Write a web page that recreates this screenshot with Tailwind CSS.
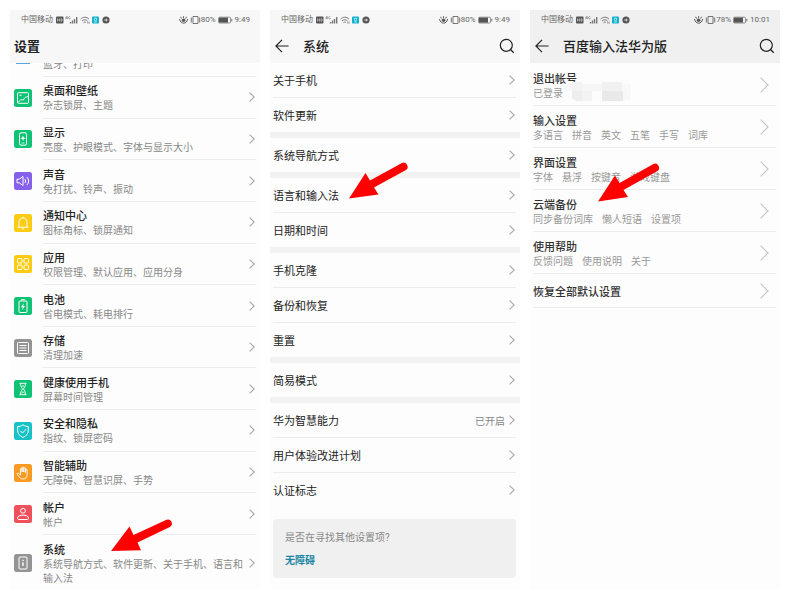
<!DOCTYPE html>
<html lang="zh-CN">
<head>
    <meta charset="UTF-8">
    <meta name="viewport" content="width=device-width, initial-scale=1.0">
    <title>设置</title>
    <script src="https://cdn.jsdelivr.net/npm/@tailwindcss/browser@4"></script>
</head>
<body class="bg-white font-['Roboto','Noto_Sans_CJK_SC',sans-serif] text-[#333]">

    <!-- 公共图标 -->
    <svg class="hidden">
        <symbol id="status-left" viewBox="0 0 55 10">
            <rect x="0" y="1.5" width="7.5" height="7" rx="1" fill="#555"/>
            <path d="M1.5 3.5v3M3.5 3.5v3M1.5 5h2M5 3.5v3c1.6 0 1.6-3 0-3" stroke="#ddd" stroke-width=".6" fill="none"/>
            <path d="M11 1.2L9.6 3.2h2M11.1 1.2v3M14.2 1.8c-1.8-1-2.2 2.2-.4 2.2.5 0 .5-.6.5-1" stroke="#777" stroke-width=".7" fill="none"/>
            <path d="M14.5 8.5v-1.5M16.5 8.5v-3M18.5 8.5v-4.5M20.7 8.5v-6.500" stroke="#777" stroke-width="1.4"/>
            <path d="M24.6 4.2c2.4-2.6 6-2.600 8.4 0M26 6c1.6-1.600 4-1.600 5.6 0M27.500 7.700c.8-.8 1.800-.8 2.600 0" stroke="#777" stroke-width="1" fill="none"/>
            <path d="M31.8 6.500v2.200M33.200 6.500v2.200" stroke="#777" stroke-width=".7"/>
            <rect x="36" y="1.5" width="7" height="7" rx="1" fill="#12b0cc"/>
            <path d="M38.4 3.2v1.6a1.1 1.1 0 0 0 2.2 0V3.2zM38.2 7h2.6" stroke="#c8f3fa" stroke-width=".8" fill="none"/>
            <circle cx="50" cy="5" r="3.6" fill="#555"/>
            <path d="M48.200 5h3.600M50.400 3.600v2.800" stroke="#ddd" stroke-width=".9"/>
        </symbol>
        <symbol id="status-eye" viewBox="0 0 22 10">
            <path d="M.5 4c1.200 5.600 7 5.600 8.200 0M2.600 3.600L1.600 1.800M4.600 3V1.200M6.600 3.600L7.600 1.800" stroke="#555" stroke-width="1" fill="none"/>
            <circle cx="4.600" cy="5.200" r="1.800" fill="#555"/>
            <path d="M14 1.5h5v7h-5zM12.3 2.5v5M20.7 2.5v5" stroke="#666" stroke-width=".9" fill="none"/>
        </symbol>
        <symbol id="battery-level" viewBox="0 0 15 10">
            <rect x=".5" y="2.2" width="12" height="5.8" rx="1" fill="none" stroke="#777" stroke-width=".8"/>
            <rect x="1" y="2.6" width="9" height="5" fill="#555"/>
            <path d="M13.8 3.8v2.6" stroke="#777" stroke-width="1"/>
        </symbol>
        <symbol id="chevron" viewBox="0 0 6 10">
            <path d="M.6.6L5.2 5 .6 9.4" fill="none" stroke="currentColor" stroke-width="1.2"/>
        </symbol>
        <symbol id="chevron-large" viewBox="0 0 9 16">
            <path d="M.7.7L8 8 .7 15.3" fill="none" stroke="currentColor" stroke-width="1.1"/>
        </symbol>
        <symbol id="back" viewBox="0 0 14 14">
            <path d="M7 .8L.9 7 7 13.2M1 7h12.6" fill="none" stroke="#222" stroke-width="1.2"/>
        </symbol>
        <symbol id="search" viewBox="0 0 16 16">
            <circle cx="7.3" cy="7.3" r="6" fill="none" stroke="#222" stroke-width="1.2"/>
            <path d="M11.5 11.5l3.2 3.2" stroke="#222" stroke-width="1.3"/>
        </symbol>
    </svg>

    <main class="min-h-screen p-[10px] grid grid-cols-3 gap-[10px]">

        <!-- 设置 -->
        <section class="flex flex-col bg-[#fdfdfd]">
            <header class="h-[53px] bg-[#f7f7f7]">
                <div class="h-[18px] pt-px pl-[11px] pr-[10px] flex items-center text-[8px] text-[#666]">
                    <span>中国移动</span>
                    <svg class="w-[55px] h-[10px] ml-[3px]"><use href="#status-left"/></svg>
                    <svg class="w-[22px] h-[10px] ml-auto"><use href="#status-eye"/></svg>
                    <span>80%</span>
                    <svg class="w-[15px] h-[10px] mx-[2px]"><use href="#battery-level"/></svg>
                    <span>9:49</span>
                </div>
                <h1 class="pt-px pl-1 text-[13px] leading-9 font-bold text-[#222]">设置</h1>
            </header>
            <nav class="flex-1 flex flex-col text-[10px] leading-[14px] text-[#888]">
                <a href="#" class="h-[14px] px-1 flex gap-[11px] overflow-hidden">
                    <span class="w-[18px] px-[2px]"><span class="block h-px bg-[#5aa5dd]"></span></span>
                    <span class="flex-1 h-[14px] flex items-end border-b border-[#ececec]"><span class="mb-1">蓝牙、打印</span></span>
                </a>
                <a href="#" class="flex-1 px-1 flex items-center gap-[11px]">
                    <svg class="w-[18px] h-[18px]" viewBox="0 0 18 18" fill="none" stroke="#fff">
                        <rect width="18" height="18" rx="2.5" fill="#10c274" stroke="none"/>
                        <rect x="3.5" y="3.7" width="11" height="10.6" rx="1"/>
                        <path d="M4.500 13.500c1.500-3 3-3 4.800-2.500C10.500 8.500 12 7.700 14 7.700M5.500 6.300L7.500 6.300"/>
                    </svg>
                    <span class="flex-1 self-stretch flex items-center border-b border-[#ececec] pr-px">
                        <span class="flex-1 pt-1"><b class="block text-[11px] font-medium text-[#222]">桌面和壁纸</b>杂志锁屏、主题</span>
                        <svg class="w-[6px] h-[10px] text-[#aaa]"><use href="#chevron"/></svg>
                    </span>
                </a>
                <a href="#" class="flex-1 px-1 flex items-center gap-[11px]">
                    <svg class="w-[18px] h-[18px]" viewBox="0 0 18 18" fill="none" stroke="#fff">
                        <rect width="18" height="18" rx="2.5" fill="#10c274" stroke="none"/>
                        <rect x="5.500" y="2.800" width="7" height="12.400" rx="1.500"/>
                        <path d="M9 5.500l.8 1.900 1.900.8-1.900.8L9 10.900 8.200 9l-1.900-.8 1.900-.8z" fill="#fff" stroke="none"/>
                        <path d="M7.500 13h3" stroke-width=".7"/>
                    </svg>
                    <span class="flex-1 self-stretch flex items-center border-b border-[#ececec] pr-px">
                        <span class="flex-1 pt-1"><b class="block text-[11px] font-medium text-[#222]">显示</b>亮度、护眼模式、字体与显示大小</span>
                        <svg class="w-[6px] h-[10px] text-[#aaa]"><use href="#chevron"/></svg>
                    </span>
                </a>
                <a href="#" class="flex-1 px-1 flex items-center gap-[11px]">
                    <svg class="w-[18px] h-[18px]" viewBox="0 0 18 18" fill="none" stroke="#fff">
                        <rect width="18" height="18" rx="2.5" fill="#8560ea" stroke="none"/>
                        <path d="M3 7.200h2.200L9 4.500v9L5.200 10.800H3zM10.800 7c1 1.200 1 2.800 0 4M12.800 5c2.400 2.400 2.400 5.600 0 8" stroke-linejoin="round"/>
                    </svg>
                    <span class="flex-1 self-stretch flex items-center border-b border-[#ececec] pr-px">
                        <span class="flex-1 pt-1"><b class="block text-[11px] font-medium text-[#222]">声音</b>免打扰、铃声、振动</span>
                        <svg class="w-[6px] h-[10px] text-[#aaa]"><use href="#chevron"/></svg>
                    </span>
                </a>
                <a href="#" class="flex-1 px-1 flex items-center gap-[11px]">
                    <svg class="w-[18px] h-[18px]" viewBox="0 0 18 18" fill="none" stroke="#fff">
                        <rect width="18" height="18" rx="2.5" fill="#fccb12" stroke="none"/>
                        <path d="M3.500 13.200h11M5 13V8.200C5 2.500 13 2.500 13 8.200V13M9 3.800V2.600M7.800 14.800h2.400"/>
                    </svg>
                    <span class="flex-1 self-stretch flex items-center border-b border-[#ececec] pr-px">
                        <span class="flex-1 pt-1"><b class="block text-[11px] font-medium text-[#222]">通知中心</b>图标角标、锁屏通知</span>
                        <svg class="w-[6px] h-[10px] text-[#aaa]"><use href="#chevron"/></svg>
                    </span>
                </a>
                <a href="#" class="flex-1 px-1 flex items-center gap-[11px]">
                    <svg class="w-[18px] h-[18px]" viewBox="0 0 18 18" fill="none" stroke="#fff">
                        <rect width="18" height="18" rx="2.5" fill="#fccb12" stroke="none"/>
                        <rect x="3.500" y="3.500" width="4.600" height="4.600" rx="1.200"/>
                        <rect x="10" y="3.500" width="4.600" height="4.600" rx="1.200"/>
                        <rect x="3.500" y="10" width="4.600" height="4.600" rx="1.200"/>
                        <rect x="10" y="10" width="4.600" height="4.600" rx="1.200"/>
                    </svg>
                    <span class="flex-1 self-stretch flex items-center border-b border-[#ececec] pr-px">
                        <span class="flex-1 pt-1"><b class="block text-[11px] font-medium text-[#222]">应用</b>权限管理、默认应用、应用分身</span>
                        <svg class="w-[6px] h-[10px] text-[#aaa]"><use href="#chevron"/></svg>
                    </span>
                </a>
                <a href="#" class="flex-1 px-1 flex items-center gap-[11px]">
                    <svg class="w-[18px] h-[18px]" viewBox="0 0 18 18" fill="none" stroke="#fff">
                        <rect width="18" height="18" rx="2.5" fill="#10c274" stroke="none"/>
                        <rect x="5" y="4" width="8" height="11.500" rx="1"/>
                        <path d="M7.200 2.700h3.600"/>
                        <path d="M9.600 6.300L7 10.200h1.600L8.300 13l2.700-4H9.400z" fill="#fff" stroke="none"/>
                    </svg>
                    <span class="flex-1 self-stretch flex items-center border-b border-[#ececec] pr-px">
                        <span class="flex-1 pt-1"><b class="block text-[11px] font-medium text-[#222]">电池</b>省电模式、耗电排行</span>
                        <svg class="w-[6px] h-[10px] text-[#aaa]"><use href="#chevron"/></svg>
                    </span>
                </a>
                <a href="#" class="flex-1 px-1 flex items-center gap-[11px]">
                    <svg class="w-[18px] h-[18px]" viewBox="0 0 18 18" fill="none" stroke="#fff">
                        <rect width="18" height="18" rx="2.5" fill="#949494" stroke="none"/>
                        <rect x="3.500" y="3.500" width="11" height="11" rx="1"/>
                        <path d="M5.500 6.500h7M5.500 9h7M5.500 11.500h7"/>
                    </svg>
                    <span class="flex-1 self-stretch flex items-center border-b border-[#ececec] pr-px">
                        <span class="flex-1 pt-1"><b class="block text-[11px] font-medium text-[#222]">存储</b>清理加速</span>
                        <svg class="w-[6px] h-[10px] text-[#aaa]"><use href="#chevron"/></svg>
                    </span>
                </a>
                <a href="#" class="flex-1 px-1 flex items-center gap-[11px]">
                    <svg class="w-[18px] h-[18px]" viewBox="0 0 18 18" fill="none" stroke="#fff">
                        <rect width="18" height="18" rx="2.5" fill="#10c274" stroke="none"/>
                        <path d="M5.500 3.300h7M5.500 14.700h7M6.500 3.500c0 3 1.200 4 2 5.500-.8 1.500-2 2.500-2 5.500M11.500 3.500c0 3-1.200 4-2 5.500.8 1.500 2 2.500 2 5.500M7.800 6h2.400M7.500 13l1.500-1.200 1.500 1.200" stroke-width=".9"/>
                    </svg>
                    <span class="flex-1 self-stretch flex items-center border-b border-[#ececec] pr-px">
                        <span class="flex-1 pt-1"><b class="block text-[11px] font-medium text-[#222]">健康使用手机</b>屏幕时间管理</span>
                        <svg class="w-[6px] h-[10px] text-[#aaa]"><use href="#chevron"/></svg>
                    </span>
                </a>
                <a href="#" class="flex-1 px-1 flex items-center gap-[11px]">
                    <svg class="w-[18px] h-[18px]" viewBox="0 0 18 18" fill="none" stroke="#fff">
                        <rect width="18" height="18" rx="2.5" fill="#16c2c6" stroke="none"/>
                        <path d="M9 2.800c1.800 1.300 3.500 1.700 5.300 1.700v4.300c0 3-2 5-5.300 6.700-3.300-1.700-5.300-3.700-5.300-6.700V4.500C5.500 4.500 7.200 4.100 9 2.800zM6.300 8.800l2.200 2.200 3.600-3.800" stroke-linejoin="round"/>
                    </svg>
                    <span class="flex-1 self-stretch flex items-center border-b border-[#ececec] pr-px">
                        <span class="flex-1 pt-1"><b class="block text-[11px] font-medium text-[#222]">安全和隐私</b>指纹、锁屏密码</span>
                        <svg class="w-[6px] h-[10px] text-[#aaa]"><use href="#chevron"/></svg>
                    </span>
                </a>
                <a href="#" class="flex-1 px-1 flex items-center gap-[11px]">
                    <svg class="w-[18px] h-[18px]" viewBox="0 0 18 18" fill="none" stroke="#fff">
                        <rect width="18" height="18" rx="2.5" fill="#fb9a22" stroke="none"/>
                        <path d="M6.500 9V5c0-1.200 1.600-1.200 1.600 0v3V4c0-1.200 1.700-1.200 1.700 0v4V4.500c0-1.200 1.700-1.200 1.700 0V8.500 6c0-1.200 1.600-1.200 1.600 0v4.500c0 3-1.600 4.500-4.100 4.500-2.300 0-3.300-1.200-5.700-4.500-.7-1.200.7-1.900 1.500-1l1.700 1.500z" stroke-width=".9" stroke-linejoin="round"/>
                    </svg>
                    <span class="flex-1 self-stretch flex items-center border-b border-[#ececec] pr-px">
                        <span class="flex-1 pt-1"><b class="block text-[11px] font-medium text-[#222]">智能辅助</b>无障碍、智慧识屏、手势</span>
                        <svg class="w-[6px] h-[10px] text-[#aaa]"><use href="#chevron"/></svg>
                    </span>
                </a>
                <a href="#" class="flex-1 px-1 flex items-center gap-[11px]">
                    <svg class="w-[18px] h-[18px]" viewBox="0 0 18 18" fill="none" stroke="#fff">
                        <rect width="18" height="18" rx="2.5" fill="#ef5059" stroke="none"/>
                        <circle cx="9" cy="5.800" r="2.400"/>
                        <path d="M3.500 13c0-3.800 11-3.800 11 0 0 1-.5 1.500-1.500 1.500H5c-1 0-1.500-.5-1.500-1.500z"/>
                    </svg>
                    <span class="flex-1 self-stretch flex items-center border-b border-[#ececec] pr-px">
                        <span class="flex-1 pt-1"><b class="block text-[11px] font-medium text-[#222]">帐户</b>帐户</span>
                        <svg class="w-[6px] h-[10px] text-[#aaa]"><use href="#chevron"/></svg>
                    </span>
                </a>
                <a href="#" class="relative h-[55px] pl-1 pr-[5px] flex items-center">
                    <svg class="w-[18px] h-[18px]" viewBox="0 0 18 18" fill="none" stroke="#fff">
                        <rect width="18" height="18" rx="2.5" fill="#949494" stroke="none"/>
                        <rect x="5" y="3" width="8" height="12" rx="1"/>
                        <path d="M9 5.800v1.300M9 8.300v3.700" stroke-width="1.400"/>
                    </svg>
                    <span class="flex-1 pt-1 ml-[11px]"><b class="block text-[11px] font-medium text-[#222]">系统</b>系统导航方式、软件更新、关于手机、语言和输入法</span>
                    <svg class="w-[6px] h-[10px] text-[#aaa]"><use href="#chevron"/></svg>
                    <svg class="absolute left-[100px] -top-[18px] w-[64px] h-[36px]" viewBox="0 0 64 36" fill="#f00">
                        <path d="M1 34L19.500 9.500l4 8.500L56.500 2.800a4 4 0 0 1 3.400 7.200L27.500 25.500l3.500 7.800z"/>
                    </svg>
                </a>
            </nav>
        </section>

        <!-- 系统 -->
        <section class="flex flex-col bg-[#fdfdfd]">
            <header class="h-[53px] bg-[#f7f7f7]">
                <div class="h-[18px] pt-px pl-[11px] pr-[10px] flex items-center text-[8px] text-[#666]">
                    <span>中国移动</span>
                    <svg class="w-[55px] h-[10px] ml-[3px]"><use href="#status-left"/></svg>
                    <svg class="w-[22px] h-[10px] ml-auto"><use href="#status-eye"/></svg>
                    <span>80%</span>
                    <svg class="w-[15px] h-[10px] mx-[2px]"><use href="#battery-level"/></svg>
                    <span>9:49</span>
                </div>
                <div class="h-9 pl-[5px] pr-[5px] flex items-center">
                    <button type="button" aria-label="返回"><svg class="w-[14px] h-[14px]"><use href="#back"/></svg></button>
                    <h2 class="flex-1 pt-px pl-[14px] text-[13px] leading-9 font-medium text-[#222]">系统</h2>
                    <button type="button" aria-label="搜索"><svg class="w-4 h-4"><use href="#search"/></svg></button>
                </div>
            </header>
            <nav class="flex-1 flex flex-col text-[11px] leading-[14px] text-[#222]">
                <a href="#" class="flex-1 ml-[3px] mr-1 pr-px flex items-center justify-between border-b border-[#ececec]"><span class="pt-1">关于手机</span><svg class="w-[6px] h-[10px] text-[#aaa]"><use href="#chevron"/></svg></a>
                <a href="#" class="flex-1 ml-[3px] mr-1 pr-px flex items-center justify-between"><span class="pt-1">软件更新</span><svg class="w-[6px] h-[10px] text-[#aaa]"><use href="#chevron"/></svg></a>
                <div class="h-[6px] bg-[#f2f2f2]"></div>
                <a href="#" class="flex-1 ml-[3px] mr-1 pr-px flex items-center justify-between"><span class="pt-1">系统导航方式</span><svg class="w-[6px] h-[10px] text-[#aaa]"><use href="#chevron"/></svg></a>
                <div class="h-[6px] bg-[#f2f2f2]"></div>
                <a href="#" class="relative flex-1 ml-[3px] mr-1 pr-px flex items-center justify-between border-b border-[#ececec]">
                    <span class="pt-1">语言和输入法</span>
                    <svg class="w-[6px] h-[10px] text-[#aaa]"><use href="#chevron"/></svg>
                    <svg class="absolute left-[75px] -top-[17px] w-[64px] h-[40px]" viewBox="0 0 64 40" fill="#f00">
                        <path d="M1 37.500L17.500 12l4.500 7.500L53.500 2.300a4 4 0 0 1 4 7L26 26.500l4.500 7z"/>
                    </svg>
                </a>
                <a href="#" class="flex-1 ml-[3px] mr-1 pr-px flex items-center justify-between"><span class="pt-1">日期和时间</span><svg class="w-[6px] h-[10px] text-[#aaa]"><use href="#chevron"/></svg></a>
                <div class="h-[6px] bg-[#f2f2f2]"></div>
                <a href="#" class="flex-1 ml-[3px] mr-1 pr-px flex items-center justify-between border-b border-[#ececec]"><span class="pt-1">手机克隆</span><svg class="w-[6px] h-[10px] text-[#aaa]"><use href="#chevron"/></svg></a>
                <a href="#" class="flex-1 ml-[3px] mr-1 pr-px flex items-center justify-between border-b border-[#ececec]"><span class="pt-1">备份和恢复</span><svg class="w-[6px] h-[10px] text-[#aaa]"><use href="#chevron"/></svg></a>
                <a href="#" class="flex-1 ml-[3px] mr-1 pr-px flex items-center justify-between"><span class="pt-1">重置</span><svg class="w-[6px] h-[10px] text-[#aaa]"><use href="#chevron"/></svg></a>
                <div class="h-[6px] bg-[#f2f2f2]"></div>
                <a href="#" class="flex-1 ml-[3px] mr-1 pr-px flex items-center justify-between"><span class="pt-1">简易模式</span><svg class="w-[6px] h-[10px] text-[#aaa]"><use href="#chevron"/></svg></a>
                <div class="h-[6px] bg-[#f2f2f2]"></div>
                <a href="#" class="flex-1 ml-[3px] mr-1 pr-px flex items-center justify-between border-b border-[#ececec]">
                    <span class="pt-1">华为智慧能力</span>
                    <span class="pt-1 ml-auto mr-1 text-[10px] text-[#888]">已开启</span>
                    <svg class="w-[6px] h-[10px] text-[#aaa]"><use href="#chevron"/></svg>
                </a>
                <a href="#" class="flex-1 ml-[3px] mr-1 pr-px flex items-center justify-between border-b border-[#ececec]"><span class="pt-1">用户体验改进计划</span><svg class="w-[6px] h-[10px] text-[#aaa]"><use href="#chevron"/></svg></a>
                <a href="#" class="flex-1 ml-[3px] mr-1 pr-px flex items-center justify-between"><span class="pt-1">认证标志</span><svg class="w-[6px] h-[10px] text-[#aaa]"><use href="#chevron"/></svg></a>
            </nav>
            <aside class="ml-[3px] mr-1 my-3 px-3 pt-3 pb-[10px] rounded-sm bg-[#f0f0f0] text-[10px] leading-[14px] text-[#888]">
                <p>是否在寻找其他设置项?</p>
                <a href="#" class="block mt-[9px] font-bold text-[#1a86a3]">无障碍</a>
            </aside>
        </section>

        <!-- 百度输入法 -->
        <section class="flex flex-col bg-[#fdfdfd]">
            <header class="h-[53px] bg-[#f0f0f0]">
                <div class="h-[18px] pt-px pl-[11px] pr-[10px] flex items-center text-[8px] text-[#666]">
                    <span>中国移动</span>
                    <svg class="w-[55px] h-[10px] ml-[3px]"><use href="#status-left"/></svg>
                    <svg class="w-[22px] h-[10px] ml-auto"><use href="#status-eye"/></svg>
                    <span>78%</span>
                    <svg class="w-[15px] h-[10px] mx-[2px]"><use href="#battery-level"/></svg>
                    <span>10:01</span>
                </div>
                <div class="h-9 pl-[5px] pr-[5px] flex items-center">
                    <button type="button" aria-label="返回"><svg class="w-[14px] h-[14px]"><use href="#back"/></svg></button>
                    <h2 class="flex-1 pt-px pl-[14px] text-[13px] leading-9 font-medium text-[#222]">百度输入法华为版</h2>
                    <button type="button" aria-label="搜索"><svg class="w-4 h-4"><use href="#search"/></svg></button>
                </div>
            </header>
            <nav class="pt-px pl-[3px] pr-1 text-[10px] leading-[14px] text-[#999]">
                <a href="#" class="relative h-[42px] pr-[7px] flex items-center justify-between border-b border-[#ececec]">
                    <span class="pt-1"><b class="block text-[11px] font-medium text-[#333]">退出帐号</b>已登录</span>
                    <svg class="w-[9px] h-4 text-[#c4c4c4]"><use href="#chevron-large"/></svg>
                    <!-- 账号打码 -->
                    <svg class="absolute left-[30px] top-4 w-[72px] h-[26px]" viewBox="0 0 72 26">
                        <path d="M0 8q2-7 16-6l50-2v22H12Q0 20 0 8z" fill="#fcfcfc"/>
                        <path d="M1 8q3-5 8-6v9H1z" fill="#f8f8f8"/>
                        <path d="M9 2h10v9H9z" fill="#f3f3f3"/>
                        <path d="M19 4h20v7H19z" fill="#f6f6f6"/>
                        <path d="M9 11h10v10H13l-4-3z" fill="#eee"/>
                        <path d="M19 11h10v10H19z" fill="#f3f3f3"/>
                        <path d="M39 2h20v9H39z" fill="#f1f1f1"/>
                        <path d="M39 11h21v10H39z" fill="#e9e9e9"/>
                        <path d="M60 4h8v16h-8z" fill="#f8f8f8"/>
                    </svg>
                </a>
                <a href="#" class="h-[42px] pr-[7px] flex items-center justify-between border-b border-[#ececec]">
                    <span class="pt-1"><b class="block text-[11px] font-medium text-[#333]">输入设置</b><span class="flex gap-[9px]"><span>多语言</span><span>拼音</span><span>英文</span><span>五笔</span><span>手写</span><span>词库</span></span></span>
                    <svg class="w-[9px] h-4 text-[#c4c4c4]"><use href="#chevron-large"/></svg>
                </a>
                <a href="#" class="h-[42px] pr-[7px] flex items-center justify-between border-b border-[#ececec]">
                    <span class="pt-1"><b class="block text-[11px] font-medium text-[#333]">界面设置</b><span class="flex gap-[9px]"><span>字体</span><span>悬浮</span><span>按键音</span><span>游戏键盘</span></span></span>
                    <svg class="w-[9px] h-4 text-[#c4c4c4]"><use href="#chevron-large"/></svg>
                </a>
                <a href="#" class="relative h-[42px] pr-[7px] flex items-center justify-between border-b border-[#ececec]">
                    <span class="pt-1"><b class="block text-[11px] font-medium text-[#333]">云端备份</b><span class="flex gap-[9px]"><span>同步备份词库</span><span>懒人短语</span><span>设置项</span></span></span>
                    <svg class="w-[9px] h-4 text-[#c4c4c4]"><use href="#chevron-large"/></svg>
                    <svg class="absolute left-16 -top-7 w-[68px] h-[42px]" viewBox="0 0 68 42" fill="#f00">
                        <path d="M1 39.500L18 13.500l4.500 7.500L56 2.300a4 4 0 0 1 4 7L26.500 28l4.500 7z"/>
                    </svg>
                </a>
                <a href="#" class="h-[42px] pr-[7px] flex items-center justify-between border-b border-[#ececec]">
                    <span class="pt-1"><b class="block text-[11px] font-medium text-[#333]">使用帮助</b><span class="flex gap-[9px]"><span>反馈问题</span><span>使用说明</span><span>关于</span></span></span>
                    <svg class="w-[9px] h-4 text-[#c4c4c4]"><use href="#chevron-large"/></svg>
                </a>
                <a href="#" class="h-[34px] pr-[7px] flex items-center justify-between border-b border-[#ececec]">
                    <b class="pt-1 text-[11px] font-medium text-[#333]">恢复全部默认设置</b>
                    <svg class="w-[9px] h-4 text-[#c4c4c4]"><use href="#chevron-large"/></svg>
                </a>
            </nav>
        </section>

    </main>
</body>
</html>
